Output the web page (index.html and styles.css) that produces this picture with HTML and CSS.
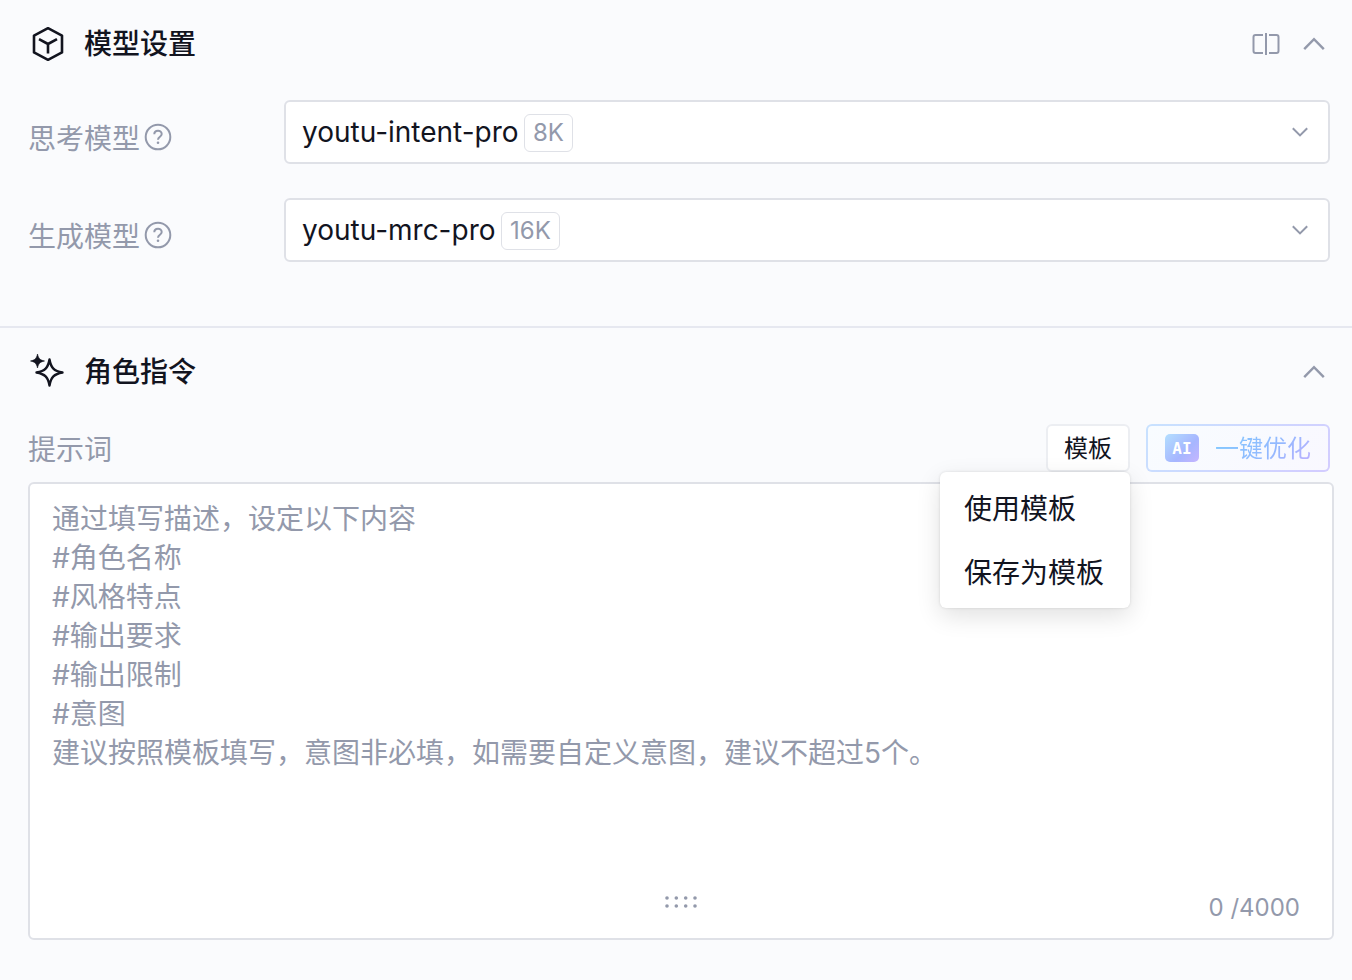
FILE: index.html
```
<!DOCTYPE html>
<html lang="zh-CN">
<head>
  <meta charset="UTF-8">
  <title>模型设置</title>
  <link rel="stylesheet" href="styles.css">
</head>
<body>
  <section class="panel">
    <div class="panel-header">
      <svg class="panel-icon" viewBox="0 0 36 36" fill="none" stroke="currentColor" stroke-width="2.6" stroke-linejoin="round">
        <path d="M18 2.2 32 9.6V26.4L18 33.8 4 26.4V9.6Z"/>
        <path d="M9 13.2 18 18 27 13.2M18 18V27.6"/>
      </svg>
      <h2 class="panel-title">模型设置</h2>
      <div class="panel-actions">
        <button class="icon-button" type="button" aria-label="对比">
          <svg width="28" height="24" viewBox="0 0 28 24" fill="none" stroke="currentColor" stroke-width="2">
            <path d="M11 3H3.5Q1.500 3 1.500 5V19Q1.500 21 3.500 21H11M17 3H24.500Q26.500 3 26.500 5V19Q26.500 21 24.500 21H17M14 1V23"/>
          </svg>
        </button>
        <button class="icon-button" type="button" aria-label="收起">
          <svg width="22" height="14" viewBox="0 0 22 14" fill="none" stroke="currentColor" stroke-width="2.4">
            <path d="M1.200 12.200 11 2.200 20.800 12.200"/>
          </svg>
        </button>
      </div>
    </div>

    <div class="field-list">
      <div class="field">
        <div class="field-label">
          <label for="thinkModel">思考模型</label>
          <svg class="help-icon" viewBox="0 0 28 28" fill="none" stroke="currentColor" stroke-width="2">
            <circle cx="14" cy="14" r="12.300"/>
            <path d="M10.300 11.200C10.300 6.600 17.700 6.600 17.700 11C17.700 13.800 14 13.700 14 16.800"/>
            <circle cx="14" cy="19.800" r="1.300" fill="currentColor" stroke="none"/>
          </svg>
        </div>
        <div class="select-box">
          <select class="select" id="thinkModel">
            <option>youtu-intent-pro</option>
          </select>
          <span class="tag">8K</span>
          <svg class="select-arrow" viewBox="0 0 16 10" fill="none" stroke="currentColor" stroke-width="2">
            <path d="M.8 1.200 8 8.400 15.200 1.200"/>
          </svg>
        </div>
      </div>
      <div class="field">
        <div class="field-label">
          <label for="answerModel">生成模型</label>
          <svg class="help-icon" viewBox="0 0 28 28" fill="none" stroke="currentColor" stroke-width="2">
            <circle cx="14" cy="14" r="12.300"/>
            <path d="M10.300 11.200C10.300 6.600 17.700 6.600 17.700 11C17.700 13.800 14 13.700 14 16.800"/>
            <circle cx="14" cy="19.800" r="1.300" fill="currentColor" stroke="none"/>
          </svg>
        </div>
        <div class="select-box">
          <select class="select" id="answerModel">
            <option>youtu-mrc-pro</option>
          </select>
          <span class="tag">16K</span>
          <svg class="select-arrow" viewBox="0 0 16 10" fill="none" stroke="currentColor" stroke-width="2">
            <path d="M.8 1.200 8 8.400 15.200 1.200"/>
          </svg>
        </div>
      </div>
    </div>
  </section>

  <section class="panel">
    <div class="panel-header">
      <svg class="panel-icon" viewBox="0 0 36 36" fill="none" stroke="currentColor" stroke-width="2.4" stroke-linejoin="round">
        <path d="M19.500 5.500C21 14 24 17 32.500 18.500C24 20 21 23 19.500 31.500C18 23 15 20 6.500 18.500C15 17 18 14 19.500 5.500Z"/>
        <path d="M7.500 0C8.500 4.500 10 6 14.500 7C10 8 8.500 9.500 7.500 14C6.500 9.500 5 8 .5 7C5 6 6.500 4.500 7.500 0Z" fill="currentColor" stroke-width=".6"/>
      </svg>
      <h2 class="panel-title">角色指令</h2>
      <div class="panel-actions">
        <button class="icon-button" type="button" aria-label="收起">
          <svg width="22" height="14" viewBox="0 0 22 14" fill="none" stroke="currentColor" stroke-width="2.4">
            <path d="M1.200 12.200 11 2.200 20.800 12.200"/>
          </svg>
        </button>
      </div>
    </div>

    <div class="prompt-bar">
      <label class="prompt-label" for="prompt">提示词</label>
      <div class="template">
        <button class="template-button" type="button">模板</button>
        <div class="template-menu">
          <button class="menu-item" type="button">使用模板</button>
          <button class="menu-item" type="button">保存为模板</button>
        </div>
      </div>
      <button class="optimize-button" type="button">
        <span class="ai-badge">AI</span>
        <span class="optimize-text">一键优化</span>
      </button>
    </div>

    <div class="prompt-box">
      <textarea class="prompt-input" id="prompt" rows="10" placeholder="通过填写描述，设定以下内容&#10;#角色名称&#10;#风格特点&#10;#输出要求&#10;#输出限制&#10;#意图&#10;建议按照模板填写，意图非必填，如需要自定义意图，建议不超过5个。"></textarea>
      <div class="prompt-footer">
        <svg class="drag-handle" viewBox="0 0 34 12" fill="currentColor">
          <circle cx="3" cy="2" r="1.800"/>
          <circle cx="12.300" cy="2" r="1.800"/>
          <circle cx="21.700" cy="2" r="1.800"/>
          <circle cx="31" cy="2" r="1.800"/>
          <circle cx="3" cy="10" r="1.800"/>
          <circle cx="12.300" cy="10" r="1.800"/>
          <circle cx="21.700" cy="10" r="1.800"/>
          <circle cx="31" cy="10" r="1.800"/>
        </svg>
        <span class="counter">0 /4000</span>
      </div>
    </div>
  </section>
</body>
</html>
```

FILE: styles.css
```
* {
  box-sizing: border-box;
}
body {
  margin: 0;
  background-color: #fafbfd;
  color: #12141f;
  font-family: Inter, "Noto Sans CJK SC", sans-serif;
  font-size: 28px;
}
button,
select,
textarea {
  font-family: inherit;
  color: inherit;
}
button {
  cursor: pointer;
}
.panel {
  padding: 24px 18px 40px 28px;
}
.panel + .panel {
  border-top: 2px solid #e6e8f0;
}
.panel-header {
  display: flex;
  align-items: center;
  height: 40px;
  padding-right: 9px;
}
.panel-icon {
  width: 36px;
  height: 36px;
  margin: 0 18px 0 2px;
}
.panel-title {
  margin: 0;
  font-size: 28px;
  font-weight: 500;
  line-height: 40px;
}
.panel-actions {
  display: flex;
  align-items: center;
  gap: 23px;
  margin-left: auto;
  color: #9399ab;
}
.icon-button {
  display: flex;
  padding: 0;
  border: none;
  background: none;
}

/* Model fields */
.field-list {
  display: flex;
  flex-direction: column;
  gap: 34px;
  padding: 36px 4px 24px 0;
}
.field {
  display: flex;
  align-items: center;
}
.field-label {
  display: flex;
  align-items: center;
  width: 256px;
  padding-top: 10px;
  color: #9399ab;
}
.help-icon {
  width: 28px;
  height: 28px;
  margin-left: 4px;
}
.select-box {
  display: flex;
  align-items: center;
  flex: 1;
  height: 64px;
  padding: 0 20px 0 16px;
  border: 2px solid #dfe1e7;
  border-radius: 6px;
  background-color: white;
}
.select {
  appearance: none;
  padding: 0;
  border: none;
  background: none;
  font-size: 28px;
  line-height: 40px;
}
.tag {
  margin: 2px 0 0 5px;
  padding: 0 8px;
  border: 1px solid #dfe1e7;
  border-radius: 6px;
  color: #9399ab;
  font-size: 24px;
  line-height: 36px;
}
.select-arrow {
  width: 16px;
  height: 10px;
  margin-left: auto;
  color: #9399ab;
}

/* Prompt toolbar */
.prompt-bar {
  display: flex;
  align-items: center;
  gap: 16px;
  padding: 32px 4px 10px 0;
}
.prompt-label {
  margin-right: auto;
  color: #9399ab;
}
.template {
  position: relative;
}
.template-button {
  display: block;
  height: 48px;
  padding: 0 16px 3px;
  border: 2px solid #eceef2;
  border-radius: 6px;
  background-color: white;
  font-size: 24px;
}
.template-menu {
  position: absolute;
  top: 100%;
  right: 0;
  padding: 4px 0;
  border-radius: 6px;
  background-color: white;
  box-shadow: 0 8px 24px rgba(0, 0, 0, 0.12), 0 0 3px rgba(0, 0, 0, 0.12);
}
.menu-item {
  display: block;
  width: 100%;
  height: 64px;
  padding: 0 26px 3px 24px;
  border: none;
  background: none;
  font-size: 28px;
  text-align: left;
  white-space: nowrap;
}
.optimize-button {
  display: flex;
  align-items: center;
  gap: 16px;
  height: 48px;
  padding: 0 17px;
  border: 2px solid transparent;
  border-radius: 6px;
  background: linear-gradient(135deg, #f8fcff, #f9f8ff) padding-box,
    linear-gradient(135deg, #c8e2ff, #d3ccff) border-box;
  font-size: 24px;
}
.ai-badge {
  width: 34px;
  height: 28px;
  border-radius: 5px;
  background: linear-gradient(135deg, #b3dfff, #a6b6ff 60%, #c6b5ff);
  color: white;
  font-family: "DejaVu Sans Mono", monospace;
  font-size: 16px;
  font-weight: bold;
  line-height: 30px;
}
.optimize-text {
  padding-bottom: 3px;
  background: linear-gradient(135deg, #80ccff, #94b8ff 60%, #c2b0ff);
  background-clip: text;
  color: transparent;
}

/* Prompt editor */
.prompt-box {
  border: 2px solid #dfe1e7;
  border-radius: 6px;
  background-color: white;
}
.prompt-input {
  display: block;
  width: 100%;
  padding: 16px 22px 0;
  border: none;
  outline: none;
  resize: none;
  background: none;
  font-size: 28px;
  line-height: 39px;
}
.prompt-input::placeholder {
  color: #9399ab;
}
.prompt-footer {
  display: grid;
  grid-template-columns: 1fr auto 1fr;
  padding: 0 32px 12px;
  color: #9399ab;
}
.drag-handle {
  grid-column: 2;
  width: 34px;
  height: 12px;
  margin-top: 6px;
}
.counter {
  justify-self: end;
  font-size: 24px;
  line-height: 36px;
}
```
